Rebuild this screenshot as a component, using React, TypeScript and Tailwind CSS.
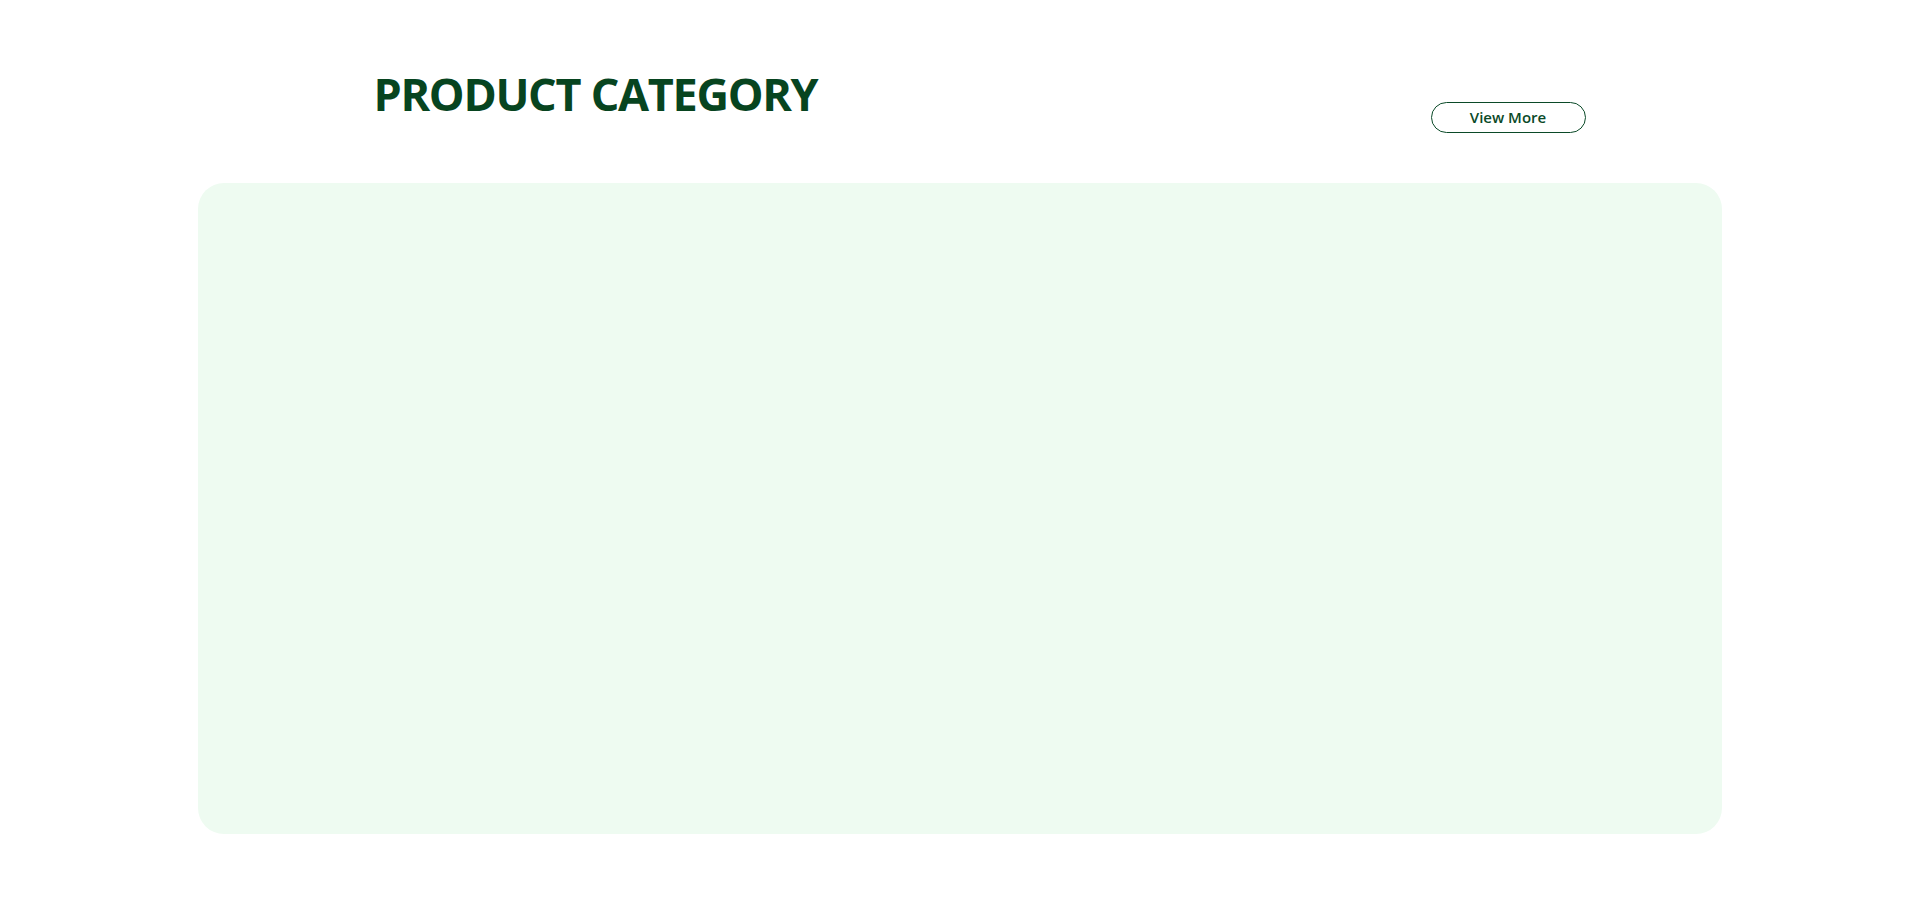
export default function App() {
  return (
    <div className="min-h-[902px] w-full bg-white">
      <section className="mx-auto w-[1525px] pt-[71px]">
        <div className="flex items-start justify-between pl-[176px] pr-[137px]">
          <h2 className="font-['Open_Sans',sans-serif] text-[45px] leading-[46px] font-bold tracking-[-1.3px] text-[#07441f]">
            PRODUCT CATEGORY
          </h2>
          <button className="mt-[31px] flex h-[31px] w-[155px] items-center justify-center rounded-full border border-[#0b4a28] font-['Open_Sans',sans-serif] text-[15px] font-semibold text-[#0b4a28]">
            View More
          </button>
        </div>
        <div className="mt-[50px] h-[651px] w-[1524px] rounded-[26px] bg-[#eefbf1]"></div>
      </section>
    </div>
  )
}
